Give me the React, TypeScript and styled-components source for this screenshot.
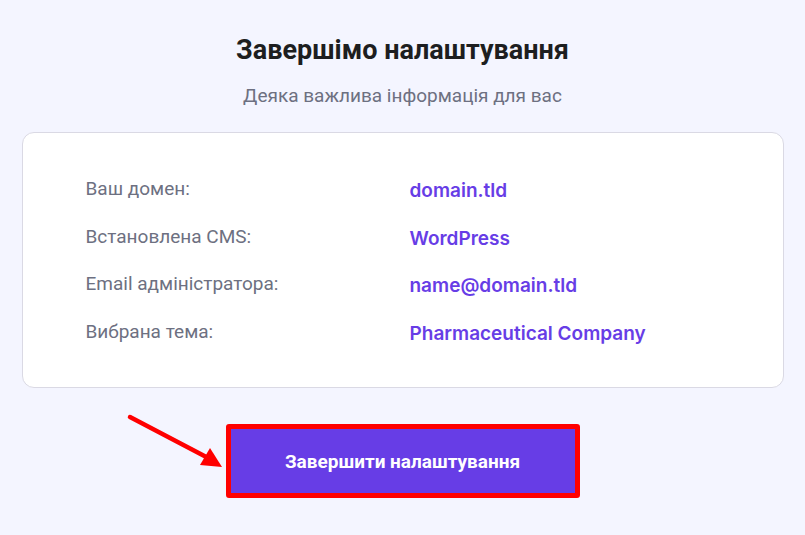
import React from "react";
import styled, { createGlobalStyle } from "styled-components";

const Global = createGlobalStyle`
  html, body { margin: 0; padding: 0; background: #f4f5ff; }
  body { font-family: Roboto, "Liberation Sans", sans-serif; }
  * { box-sizing: border-box; }
`;

const Page = styled.div`
  width: 805px;
  height: 535px;
  display: flex;
  flex-direction: column;
  align-items: center;
  padding-top: 32px;
  background: #f4f5ff;
`;

const Title = styled.h1`
  margin: 0;
  font-family: Roboto, sans-serif;
  font-weight: 700;
  font-size: 27px;
  line-height: 36px;
  color: #1d1e20;
`;

const Subtitle = styled.p`
  margin: 14px 0 0;
  font-family: Roboto, sans-serif;
  font-size: 19px;
  line-height: 28px;
  color: #6d7081;
`;

const Card = styled.div`
  margin-top: 22px;
  width: 762px;
  height: 256px;
  background: #ffffff;
  border: 1px solid #dad9e4;
  border-radius: 12px;
  padding: 44px 0 0 63px;
  display: grid;
  grid-template-columns: 324px auto;
  grid-auto-rows: 47.7px;
  align-content: start;
`;

const Label = styled.div`
  font-family: Roboto, sans-serif;
  font-size: 19px;
  line-height: 24px;
  color: #6d7081;
`;

const Value = styled.div`
  font-family: Inter, sans-serif;
  font-weight: 600;
  font-size: 19px;
  line-height: 24px;
  color: #673de6;
  padding-top: 2px;
`;

const ButtonWrap = styled.div`
  position: relative;
  margin-top: 36px;
`;

const Button = styled.button`
  width: 354px;
  height: 74px;
  border: 5px solid #ff0000;
  border-radius: 3px;
  background: #673de6;
  color: #ffffff;
  font-family: Roboto, sans-serif;
  font-weight: 700;
  font-size: 19px;
  cursor: pointer;
`;

const Arrow = styled.svg`
  position: absolute;
  left: -100px;
  top: -12px;
  width: 100px;
  height: 60px;
  overflow: visible;
`;

const rows: [string, string][] = [
  ["Ваш домен:", "domain.tld"],
  ["Встановлена CMS:", "WordPress"],
  ["Email адміністратора:", "name@domain.tld"],
  ["Вибрана тема:", "Pharmaceutical Company"],
];

export default function App() {
  return (
    <>
      <Global />
      <Page>
        <Title>Завершімо налаштування</Title>
        <Subtitle>Деяка важлива інформація для вас</Subtitle>
        <Card>
          {rows.map(([l, v]) => (
            <React.Fragment key={l}>
              <Label>{l}</Label>
              <Value>{v}</Value>
            </React.Fragment>
          ))}
        </Card>
        <ButtonWrap>
          <Arrow viewBox="0 0 100 60">
            <line x1="4" y1="5" x2="86" y2="48" stroke="#ff0000" strokeWidth="4.5" strokeLinecap="round" />
            <polygon points="96,55 74,53 84,36" fill="#ff0000" />
          </Arrow>
          <Button>Завершити налаштування</Button>
        </ButtonWrap>
      </Page>
    </>
  );
}
